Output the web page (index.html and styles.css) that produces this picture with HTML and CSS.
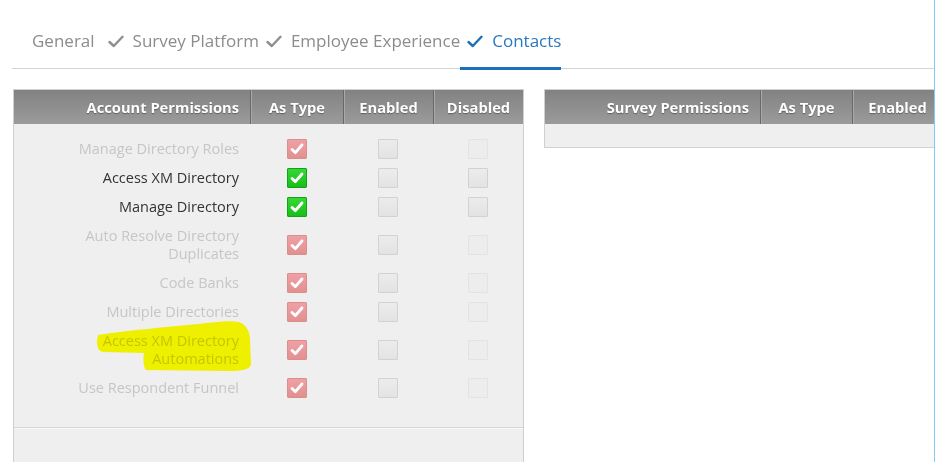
FILE: index.html
```html
<!DOCTYPE html>
<html lang="en">
<head>
<meta charset="utf-8">
<title>Permissions - Contacts</title>
<link rel="stylesheet" href="styles.css">
</head>
<body>
<div class="page">
  <nav class="tabs">
    <div class="tab tab-first">General</div>
    <div class="tab"><svg class="tick" viewBox="0 0 16 13"><path d="M1.5 7 L5.8 11 L14.5 1.8"/></svg>Survey Platform</div>
    <div class="tab"><svg class="tick" viewBox="0 0 16 13"><path d="M1.5 7 L5.8 11 L14.5 1.8"/></svg>Employee Experience</div>
    <div class="tab tab-active"><svg class="tick" viewBox="0 0 16 13"><path d="M1.5 7 L5.8 11 L14.5 1.8"/></svg>Contacts</div>
  </nav>

  <div class="tables">
    <section class="ptable ptable-account">
      <div class="thead">
        <div class="th th-label">Account Permissions</div>
        <div class="th">As Type</div>
        <div class="th">Enabled</div>
        <div class="th">Disabled</div>
      </div>
      <div class="tbody">
        <div class="row">
          <div class="label muted">Manage Directory Roles</div>
          <div class="cell"><span class="cb cb-red"><svg viewBox="0 0 20 20"><path d="M4.5 10.5 L8.2 14 L15.5 5.5"/></svg></span></div>
          <div class="cell"><span class="cb"></span></div>
          <div class="cell"><span class="cb cb-faint"></span></div>
        </div>
        <div class="row">
          <div class="label">Access XM Directory</div>
          <div class="cell"><span class="cb cb-green"><svg viewBox="0 0 20 20"><path d="M4.5 10.5 L8.2 14 L15.5 5.5"/></svg></span></div>
          <div class="cell"><span class="cb"></span></div>
          <div class="cell"><span class="cb"></span></div>
        </div>
        <div class="row">
          <div class="label">Manage Directory</div>
          <div class="cell"><span class="cb cb-green"><svg viewBox="0 0 20 20"><path d="M4.5 10.5 L8.2 14 L15.5 5.5"/></svg></span></div>
          <div class="cell"><span class="cb"></span></div>
          <div class="cell"><span class="cb"></span></div>
        </div>
        <div class="row">
          <div class="label muted">Auto Resolve Directory Duplicates</div>
          <div class="cell"><span class="cb cb-red"><svg viewBox="0 0 20 20"><path d="M4.5 10.5 L8.2 14 L15.5 5.5"/></svg></span></div>
          <div class="cell"><span class="cb"></span></div>
          <div class="cell"><span class="cb cb-faint"></span></div>
        </div>
        <div class="row">
          <div class="label muted">Code Banks</div>
          <div class="cell"><span class="cb cb-red"><svg viewBox="0 0 20 20"><path d="M4.5 10.5 L8.2 14 L15.5 5.5"/></svg></span></div>
          <div class="cell"><span class="cb"></span></div>
          <div class="cell"><span class="cb cb-faint"></span></div>
        </div>
        <div class="row">
          <div class="label muted">Multiple Directories</div>
          <div class="cell"><span class="cb cb-red"><svg viewBox="0 0 20 20"><path d="M4.5 10.5 L8.2 14 L15.5 5.5"/></svg></span></div>
          <div class="cell"><span class="cb"></span></div>
          <div class="cell"><span class="cb cb-faint"></span></div>
        </div>
        <div class="row">
          <div class="label muted label-marked">Access XM Directory Automations
            <svg class="marker" viewBox="0 -8 240 58"><path d="M84 9 C110 5 150 1 185 -2 C200 -4 215 -6 225 -4 C233 -1 236 6 236 14 L237 38 C236 44 228 45 215 45 L132 44 C129 40 129 32 130 27 L90 26 C84 26 83 20 83 15 Z"/></svg>
          </div>
          <div class="cell"><span class="cb cb-red"><svg viewBox="0 0 20 20"><path d="M4.5 10.5 L8.2 14 L15.5 5.5"/></svg></span></div>
          <div class="cell"><span class="cb"></span></div>
          <div class="cell"><span class="cb cb-faint"></span></div>
        </div>
        <div class="row">
          <div class="label muted">Use Respondent Funnel</div>
          <div class="cell"><span class="cb cb-red"><svg viewBox="0 0 20 20"><path d="M4.5 10.5 L8.2 14 L15.5 5.5"/></svg></span></div>
          <div class="cell"><span class="cb"></span></div>
          <div class="cell"><span class="cb cb-faint"></span></div>
        </div>
      </div>
      <div class="tfoot"></div>
    </section>

    <section class="ptable ptable-survey">
      <div class="thead">
        <div class="th th-label">Survey Permissions</div>
        <div class="th">As Type</div>
        <div class="th">Enabled</div>
        <div class="th">Disabled</div>
      </div>
      <div class="tbody tbody-empty"></div>
    </section>
  </div>
</div>
</body>
</html>
```

FILE: styles.css
```css
html, body {
  margin: 0;
  padding: 0;
  overflow: hidden;
  background: #ffffff;
}

body {
  font-family: "Open Sans", "Liberation Sans", sans-serif;
  color: #333333;
}

.page {
  width: 934px;
  height: 462px;
  border-right: 1px solid #86c8ef;
  overflow: hidden;
}

/* Tabs */
.tabs {
  display: flex;
  align-items: flex-start;
  margin-left: 12px;
  padding: 29px 0 0 20px;
  border-bottom: 1px solid #d4d4d4;
}

.tab {
  display: flex;
  align-items: center;
  font-size: 17px;
  line-height: 24px;
  color: #8c8c8c;
  padding: 0 0 14px 6px;
  border-bottom: 3px solid transparent;
  margin-bottom: -2px;
  white-space: nowrap;
}

.tab-first {
  padding-left: 0;
  margin-right: 6px;
}

.tab-active {
  color: #2a78bd;
  border-bottom-color: #1c70b8;
}

.tick {
  width: 16px;
  height: 13px;
  margin-left: 1px;
  margin-right: 9px;
  fill: none;
  stroke: #8f8f8f;
  stroke-width: 2.4;
  stroke-linecap: round;
  stroke-linejoin: round;
}

.tab-active .tick {
  stroke: #1c70b8;
}

/* Tables */
.tables {
  display: flex;
  align-items: flex-start;
  gap: 20px;
  margin: 20px 0 0 13px;
}

.ptable {
  flex-shrink: 0;
  border-left: 1px solid #cfcfcf;
  border-right: 1px solid #cfcfcf;
  background: #efefef;
}

.ptable-account .thead,
.ptable-account .row {
  display: grid;
  grid-template-columns: 236px 93px 90px 90px;
}

.ptable-survey .thead {
  display: grid;
  grid-template-columns: 215px 92px 90px 90px;
}

.thead {
  height: 35px;
  background: linear-gradient(#828282, #9b9b9b);
  border-top: 1px solid #d0d0d0;
  box-sizing: border-box;
}

.th {
  display: flex;
  align-items: center;
  justify-content: center;
  font-weight: 700;
  font-size: 14.7px;
  color: #ffffff;
  text-shadow: 0 1px 1px rgba(0, 0, 0, 0.35);
  border-left: 1px solid #686868;
  box-shadow: inset 1px 0 0 #a9a9a9;
  white-space: nowrap;
}

.th-label {
  justify-content: flex-end;
  padding-right: 11px;
  border-left: none;
  box-shadow: none;
}

.tbody {
  padding: 10px 0 25px;
}

.tbody-empty {
  height: 23px;
  padding: 0;
  border-bottom: 1px solid #d2d2d2;
}

.row {
  align-items: center;
}

.label {
  position: relative;
  text-align: right;
  font-size: 14.5px;
  line-height: 18px;
  padding: 5.5px 11px 5.5px 55px;
  color: #333333;
}

.label.muted {
  color: #c6c6c6;
}

.marker {
  position: absolute;
  left: 0;
  top: -8px;
  width: 240px;
  height: 58px;
  overflow: visible;
  mix-blend-mode: multiply;
  pointer-events: none;
}

.marker path {
  fill: #ffff00;
}

.cell {
  display: flex;
  justify-content: center;
  align-items: center;
}

.cb {
  box-sizing: border-box;
  width: 20px;
  height: 20px;
  border: 1px solid #d2d2d2;
  background: linear-gradient(#ececec, #e3e3e3);
  border-radius: 1px;
  display: flex;
}

.cb svg {
  width: 18px;
  height: 18px;
  fill: none;
  stroke: #ffffff;
  stroke-width: 3.2;
  stroke-linecap: round;
  stroke-linejoin: round;
}

.cb-faint {
  border-color: #e3e3e3;
  background: #ededed;
}

.cb-red {
  border-color: #d8908a;
  background: linear-gradient(#f0a0a6, #e2908f);
}

.cb-green {
  border-color: #16a216;
  background: linear-gradient(#36d836, #19bd19);
}

.tfoot {
  height: 40px;
  border-top: 1px solid #d6d6d6;
  box-shadow: inset 0 1px 0 #f8f8f8;
}
```
